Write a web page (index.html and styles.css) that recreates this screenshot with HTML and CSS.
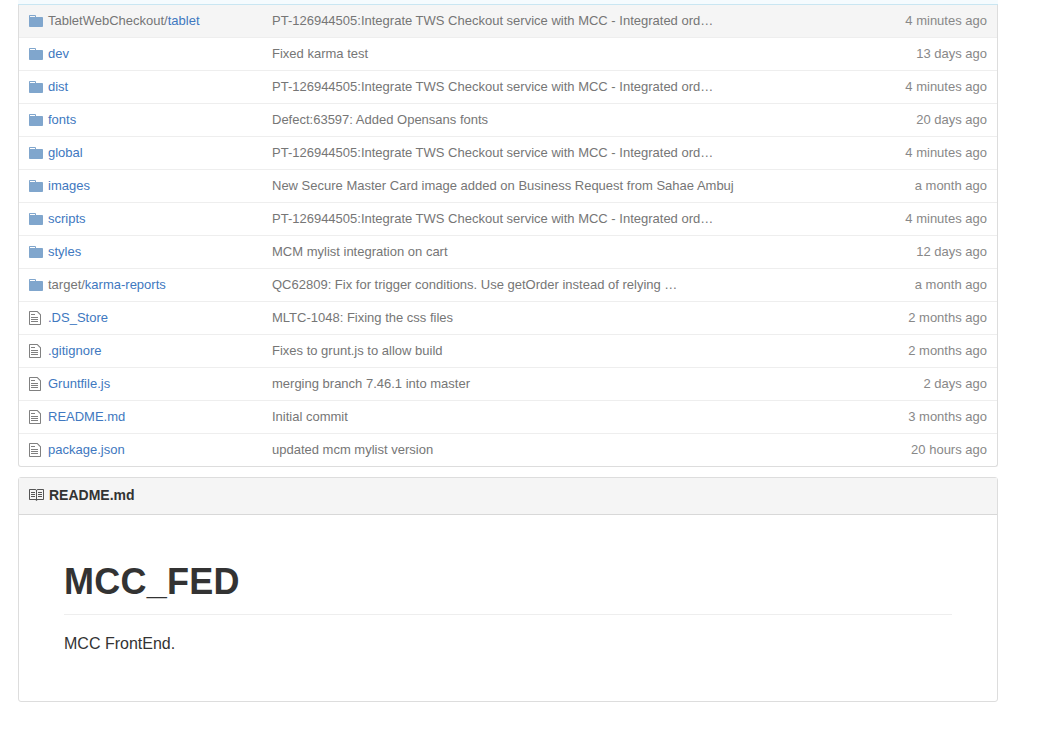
FILE: index.html
```html
<!DOCTYPE html>
<html lang="en">
<head>
    <meta charset="UTF-8">
    <meta name="viewport" content="width=device-width, initial-scale=1.0">
    <title>MCC_FED</title>
    <link rel="stylesheet" href="styles.css">
</head>
<body>
    <svg class="icon-defs" width="0" height="0">
        <symbol id="icon-folder" viewBox="0 0 14 16"><path d="M13 4H7V3c0-.66-.31-1-1-1H1c-.55 0-1 .45-1 1v10c0 .55.45 1 1 1h12c.55 0 1-.45 1-1V5c0-.55-.45-1-1-1zM6 4H1V3h5v1z"/></symbol>
        <symbol id="icon-file" viewBox="0 0 12 16"><path d="M6 5H2V4h4v1zM2 8h7V7H2v1zm0 2h7V9H2v1zm0 2h7v-1H2v1zm10-7.5V14c0 .55-.45 1-1 1H1c-.55 0-1-.45-1-1V2c0-.55.45-1 1-1h7.5L12 4.5zM11 5L8 2H1v12h10V5z"/></symbol>
        <symbol id="icon-book" viewBox="0 0 16 16"><path d="M3 5h4v1H3V5zm0 3h4V7H3v1zm0 2h4V9H3v1zm11-5h-4v1h4V5zm0 2h-4v1h4V7zm0 2h-4v1h4V9zm2-6v9c0 .55-.45 1-1 1H9.5l-1 1-1-1H2c-.55 0-1-.45-1-1V3c0-.55.45-1 1-1h5.5l1 1 1-1H15c.55 0 1 .45 1 1zm-8 .5L7.5 3H2v9h6V3.5zm7-.5H9.5l-.5.5V12h6V3z"/></symbol>
    </svg>

    <div class="repo-container">
        <div class="file-list">
            <div class="commit-strip"></div>

            <div class="file-row file-row-first">
                <div class="file-name"><svg class="icon-folder"><use href="#icon-folder"/></svg><span class="path-prefix">TabletWebCheckout/</span><a href="#">tablet</a></div>
                <div class="file-message">PT-126944505:Integrate TWS Checkout service with MCC - Integrated ord…</div>
                <div class="file-age">4 minutes ago</div>
            </div>
            <div class="file-row">
                <div class="file-name"><svg class="icon-folder"><use href="#icon-folder"/></svg><a href="#">dev</a></div>
                <div class="file-message">Fixed karma test</div>
                <div class="file-age">13 days ago</div>
            </div>
            <div class="file-row">
                <div class="file-name"><svg class="icon-folder"><use href="#icon-folder"/></svg><a href="#">dist</a></div>
                <div class="file-message">PT-126944505:Integrate TWS Checkout service with MCC - Integrated ord…</div>
                <div class="file-age">4 minutes ago</div>
            </div>
            <div class="file-row">
                <div class="file-name"><svg class="icon-folder"><use href="#icon-folder"/></svg><a href="#">fonts</a></div>
                <div class="file-message">Defect:63597: Added Opensans fonts</div>
                <div class="file-age">20 days ago</div>
            </div>
            <div class="file-row">
                <div class="file-name"><svg class="icon-folder"><use href="#icon-folder"/></svg><a href="#">global</a></div>
                <div class="file-message">PT-126944505:Integrate TWS Checkout service with MCC - Integrated ord…</div>
                <div class="file-age">4 minutes ago</div>
            </div>
            <div class="file-row">
                <div class="file-name"><svg class="icon-folder"><use href="#icon-folder"/></svg><a href="#">images</a></div>
                <div class="file-message">New Secure Master Card image added on Business Request from Sahae Ambuj</div>
                <div class="file-age">a month ago</div>
            </div>
            <div class="file-row">
                <div class="file-name"><svg class="icon-folder"><use href="#icon-folder"/></svg><a href="#">scripts</a></div>
                <div class="file-message">PT-126944505:Integrate TWS Checkout service with MCC - Integrated ord…</div>
                <div class="file-age">4 minutes ago</div>
            </div>
            <div class="file-row">
                <div class="file-name"><svg class="icon-folder"><use href="#icon-folder"/></svg><a href="#">styles</a></div>
                <div class="file-message">MCM mylist integration on cart</div>
                <div class="file-age">12 days ago</div>
            </div>
            <div class="file-row">
                <div class="file-name"><svg class="icon-folder"><use href="#icon-folder"/></svg><span class="path-prefix">target/</span><a href="#">karma-reports</a></div>
                <div class="file-message">QC62809: Fix for trigger conditions. Use getOrder instead of relying …</div>
                <div class="file-age">a month ago</div>
            </div>
            <div class="file-row">
                <div class="file-name"><svg class="icon-file"><use href="#icon-file"/></svg><a href="#">.DS_Store</a></div>
                <div class="file-message">MLTC-1048: Fixing the css files</div>
                <div class="file-age">2 months ago</div>
            </div>
            <div class="file-row">
                <div class="file-name"><svg class="icon-file"><use href="#icon-file"/></svg><a href="#">.gitignore</a></div>
                <div class="file-message">Fixes to grunt.js to allow build</div>
                <div class="file-age">2 months ago</div>
            </div>
            <div class="file-row">
                <div class="file-name"><svg class="icon-file"><use href="#icon-file"/></svg><a href="#">Gruntfile.js</a></div>
                <div class="file-message">merging branch 7.46.1 into master</div>
                <div class="file-age">2 days ago</div>
            </div>
            <div class="file-row">
                <div class="file-name"><svg class="icon-file"><use href="#icon-file"/></svg><a href="#">README.md</a></div>
                <div class="file-message">Initial commit</div>
                <div class="file-age">3 months ago</div>
            </div>
            <div class="file-row">
                <div class="file-name"><svg class="icon-file"><use href="#icon-file"/></svg><a href="#">package.json</a></div>
                <div class="file-message">updated mcm mylist version</div>
                <div class="file-age">20 hours ago</div>
            </div>
        </div>

        <div class="readme-box">
            <div class="readme-header"><svg class="icon-book"><use href="#icon-book"/></svg>README.md</div>
            <div class="readme-body">
                <h1>MCC_FED</h1>
                <p>MCC FrontEnd.</p>
            </div>
        </div>
    </div>
</body>
</html>
```

FILE: styles.css
```css
body {
    font-family: "Liberation Sans", Arial, sans-serif;
    font-size: 14px;
    margin: 0;
    background-color: #fff;
    color: #333;
}
a { color: #4078c0; text-decoration: none; }
.icon-defs { display: block; height: 0; }
.repo-container { width: 980px; margin-left: 18px; padding-bottom: 51px; }

.file-list {
    border: 1px solid #ddd;
    border-top: none;
    border-radius: 0 0 3px 3px;
}
.commit-strip {
    height: 4px;
    background-color: #f5fbfe;
    border-bottom: 1px solid #c9e6f2;
    margin: 0 -1px;
}
.file-row {
    display: flex;
    align-items: center;
    height: 33px;
    box-sizing: border-box;
    padding-right: 10px;
    padding-bottom: 1px;
    font-size: 13px;
    border-bottom: 1px solid #eee;
}
.file-row:last-child { height: 32px; border-bottom: none; }
.file-row-first { background-color: #f5f5f5; }
.file-name { display: flex; align-items: center; width: 253px; flex-shrink: 0; }
.path-prefix { color: #767676; }
.file-message { flex: 1; color: #767676; white-space: nowrap; }
.file-age { color: #888; white-space: nowrap; text-align: right; }

.icon-folder { width: 14px; height: 16px; margin: 1px 5px 0 10px; fill: #80a6cd; }
.icon-file { width: 12px; height: 16px; margin: 1px 7px 0 10px; fill: #808080; }
.icon-book { width: 16px; height: 16px; margin-right: 5px; fill: #555; }

.readme-box {
    margin-top: 10px;
    border: 1px solid #ddd;
    border-radius: 3px;
}
.readme-header {
    display: flex;
    align-items: center;
    height: 37px;
    box-sizing: border-box;
    padding: 0 0 2px 9px;
    background-color: #f5f5f5;
    border-bottom: 1px solid #d8d8d8;
    font-weight: bold;
}
.readme-body { height: 186px; box-sizing: border-box; padding: 45px 45px 0; }
.readme-body h1 {
    margin: 0 0 16px;
    padding-bottom: 10px;
    font-size: 36px;
    line-height: 44px;
    letter-spacing: 0.25px;
    border-bottom: 1px solid #eee;
}
.readme-body p { margin: 0; font-size: 16px; line-height: 25px; }
```
